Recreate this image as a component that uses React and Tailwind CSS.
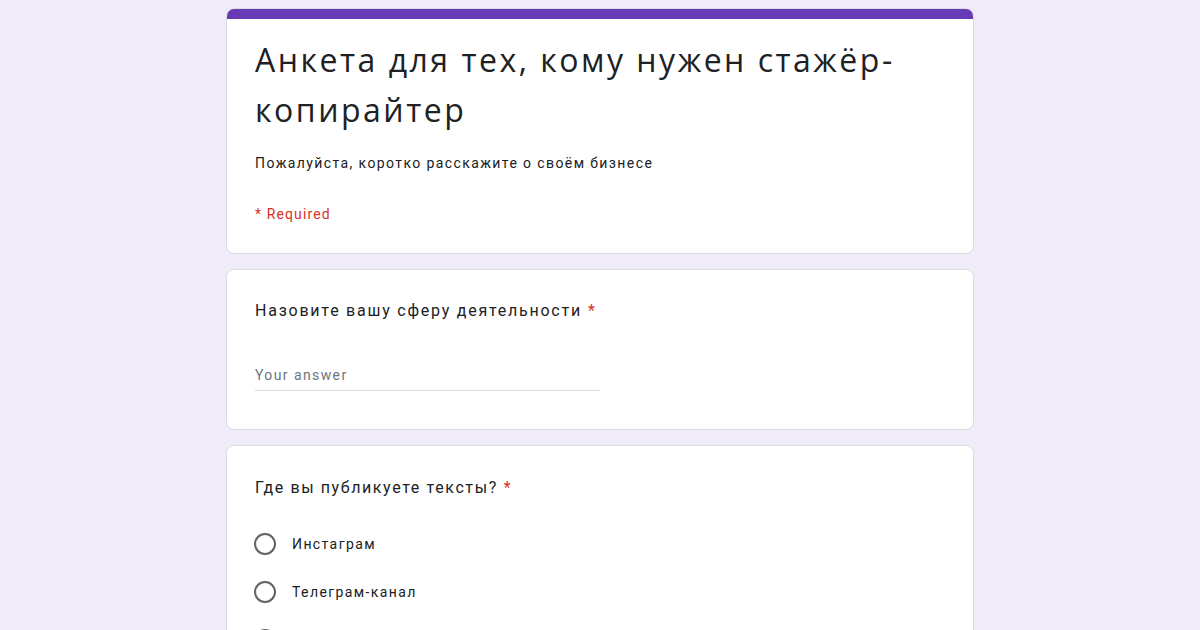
import React from "react";

const options = ["Инстаграм", "Телеграм-канал", "ВКонтакте"];

function Required() {
  return <span className="text-[#d93025] ml-1.5">*</span>;
}

export default function App() {
  return (
    <div
      className="min-h-screen bg-[#f0ebf8] pt-2 pb-10"
      style={{ fontFamily: "Roboto, Arial, sans-serif" }}
    >
      <div className="w-[748px] mx-auto flex flex-col gap-[15px]">
        {/* Header card */}
        <div className="bg-white rounded-lg border border-[#dadce0] overflow-hidden">
          <div className="h-[10px] bg-[#673ab7]" />
          <div className="px-7 pt-[16px] pb-[29px]">
            <h1 className="font-['Open_Sans',Roboto,sans-serif] text-[32px] leading-[50px] tracking-[2.5px] text-[#202124] font-normal">
              Анкета для тех, кому нужен стажёр-копирайтер
            </h1>
            <p className="mt-[18px] text-sm leading-5 tracking-[0.1em] text-[#202124]">
              Пожалуйста, коротко расскажите о своём бизнесе
            </p>
            <p className="mt-[31px] text-sm leading-5 tracking-[0.08em] text-[#d93025]">
              * Required
            </p>
          </div>
        </div>

        {/* Text question */}
        <div className="bg-white rounded-lg border border-[#dadce0] px-7 pt-[29px] pb-[38px]">
          <div className="text-base leading-6 tracking-[0.11em] text-[#202124]">
            Назовите вашу сферу деятельности
            <Required />
          </div>
          <div className="mt-[40px] w-[345px] border-b border-[#dadce0] pb-[3px]">
            <span className="text-sm leading-5 tracking-[0.1em] text-[#70757a]">Your answer</span>
          </div>
        </div>

        {/* Choice question */}
        <div className="bg-white rounded-lg border border-[#dadce0] px-7 pt-[30px] pb-8">
          <div className="text-base leading-6 tracking-[0.1em] text-[#202124]">
            Где вы публикуете тексты?
            <Required />
          </div>
          <div className="mt-[33px] flex flex-col gap-[26px]">
            {options.map((opt) => (
              <div key={opt} className="flex items-center gap-4 -ml-[1px]">
                <span className="w-[22px] h-[22px] rounded-full border-2 border-[#5f6368] shrink-0" />
                <span className="text-sm leading-5 tracking-[0.1em] text-[#202124]">{opt}</span>
              </div>
            ))}
          </div>
        </div>
      </div>
    </div>
  );
}
